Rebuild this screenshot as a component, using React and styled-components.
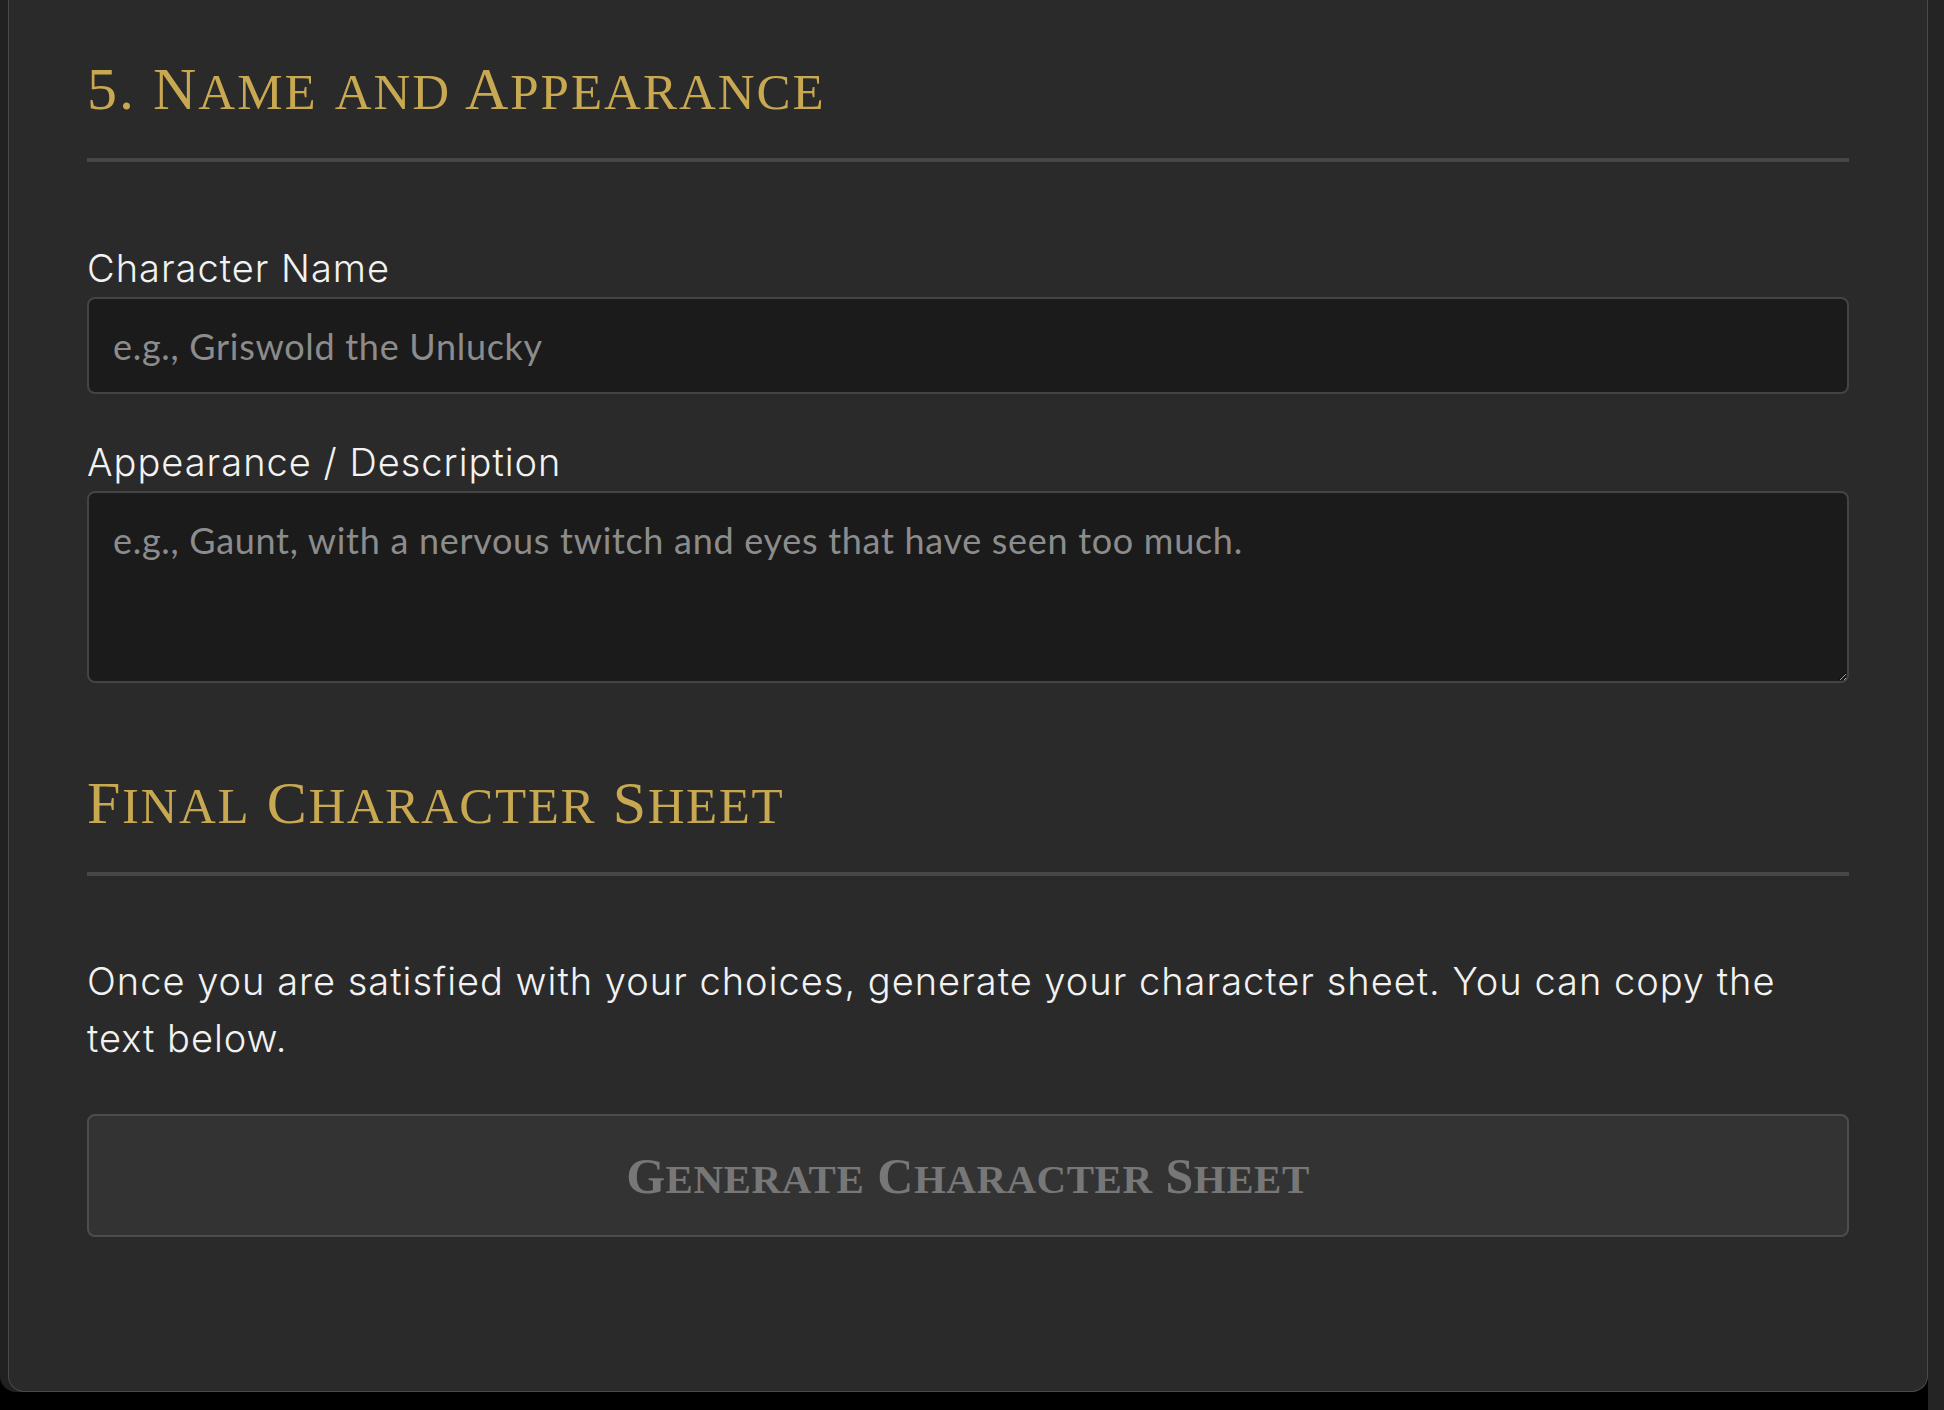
import React from 'react'
import styled, { createGlobalStyle } from 'styled-components'

const GlobalStyle = createGlobalStyle`
  html, body {
    margin: 0;
    padding: 0;
    height: 100%;
    background: #000;
  }
  #root {
    height: 100%;
  }
`

// lowercase letters are drawn as smaller capitals, like a small-caps display face
const capsRuns = (text) => {
  const runs = []
  for (const ch of text) {
    const small = ch !== ch.toUpperCase()
    const last = runs[runs.length - 1]
    if (last && last.small === small) last.text += ch
    else runs.push({ small, text: ch })
  }
  return runs
}

const SmallCaps = ({ text, scale }) => (
  <>
    {capsRuns(text).map((run, i) =>
      run.small ? (
        <Lower key={i} $scale={scale}>
          {run.text}
        </Lower>
      ) : (
        <React.Fragment key={i}>{run.text}</React.Fragment>
      )
    )}
  </>
)

export default function App() {
  return (
    <Page>
      <GlobalStyle />
      <Main>
        <Panel>
          <SectionTitle>
            <SmallCaps text="5. Name and Appearance" scale={0.85} />
          </SectionTitle>

          <Field>
            <Label htmlFor="char-name">Character Name</Label>
            <TextInput id="char-name" type="text" placeholder="e.g., Griswold the Unlucky" />
          </Field>

          <Field>
            <Label htmlFor="char-desc">Appearance / Description</Label>
            <TextArea
              id="char-desc"
              placeholder="e.g., Gaunt, with a nervous twitch and eyes that have seen too much."
            />
          </Field>

          <SectionTitle $top={84} $spacing={1.6}>
            <SmallCaps text="Final Character Sheet" scale={0.85} />
          </SectionTitle>

          <Intro>
            Once you are satisfied with your choices, generate your character sheet. You can copy the
            text below.
          </Intro>

          <GenerateButton type="button" disabled>
            <SmallCaps text="Generate Character Sheet" scale={0.82} />
          </GenerateButton>
        </Panel>
      </Main>
      <ScrollTrack />
    </Page>
  )
}

const Page = styled.div`
  display: flex;
  height: 100vh;
  overflow: hidden;
  background: #000;
`

const Main = styled.main`
  flex: 1;
  min-width: 0;
`

const ScrollTrack = styled.div`
  width: 16px;
  flex-shrink: 0;
  background: #242424;
`

const Panel = styled.section`
  margin-left: 8px;
  padding: 53px 78px 154px;
  background: #2a2a2a;
  border: 1px solid #4a4a4a;
  border-top: none;
  border-radius: 0 0 16px 16px;
  box-shadow: -8px 0 0 #212121;
`

const SectionTitle = styled.h2`
  margin: ${({ $top }) => $top || 0}px 0 0;
  padding-bottom: 30px;
  border-bottom: 4px solid #474747;
  font-family: 'Liberation Serif', 'DejaVu Serif', serif;
  font-weight: 400;
  font-size: 60px;
  line-height: 72px;
  letter-spacing: ${({ $spacing }) => $spacing ?? 2}px;
  color: #c8a951;
`

const Lower = styled.span`
  text-transform: uppercase;
  font-size: ${({ $scale }) => $scale}em;
`

const Field = styled.div`
  display: flex;
  flex-direction: column;
  margin-top: 78px;

  & + & {
    margin-top: 40px;
  }
`

const Label = styled.label`
  font-family: Inter, 'Liberation Sans', sans-serif;
  font-weight: 300;
  font-size: 38px;
  line-height: 57px;
  letter-spacing: 1px;
  color: #f2f2f2;
`

const controlStyles = `
  box-sizing: border-box;
  width: 100%;
  margin: 0;
  background: #1b1b1b;
  border: 2px solid #444;
  border-radius: 8px;
  font-family: Lato, 'Liberation Sans', sans-serif;
  font-size: 36px;
  letter-spacing: 0.7px;
  color: #ddd;
  outline: none;

  &::placeholder {
    color: #8c8c8c;
  }
`

const TextInput = styled.input`
  ${controlStyles}
  height: 97px;
  padding: 0 24px;
`

const TextArea = styled.textarea`
  ${controlStyles}
  display: block;
  height: 192px;
  padding: 22px 24px;
  line-height: 1.4;
  resize: vertical;
`

const Intro = styled.p`
  margin: 77px 0 0;
  font-family: Inter, 'Liberation Sans', sans-serif;
  font-weight: 300;
  font-size: 38px;
  line-height: 57px;
  letter-spacing: 1px;
  color: #f2f2f2;
`

const GenerateButton = styled.button`
  display: block;
  width: 100%;
  height: 123px;
  margin-top: 47px;
  padding: 0;
  background: #333;
  border: 2px solid #4d4d4d;
  border-radius: 8px;
  font-family: 'Liberation Serif', 'DejaVu Serif', serif;
  font-weight: 700;
  font-size: 50px;
  letter-spacing: 0.5px;
  color: #777;
  cursor: not-allowed;
`
